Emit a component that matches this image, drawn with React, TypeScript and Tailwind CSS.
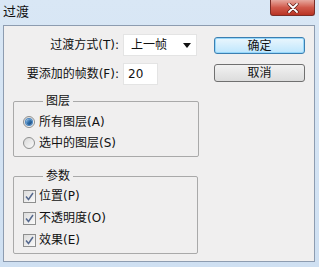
import React from "react";

const font = { fontFamily: '"DejaVu Sans", "Noto Sans CJK SC", sans-serif' };

function Radio({ checked }: { checked: boolean }) {
  return (
    <span className="w-[12px] h-[12px] rounded-full border border-[#8e8f8f] bg-gradient-to-br from-[#d8d8d8] to-[#fbfbfb] flex items-center justify-center shrink-0">
      {checked && (
        <span className="w-[6px] h-[6px] rounded-full bg-gradient-to-br from-[#9cc8ee] via-[#2f6fab] to-[#123f75] ring-1 ring-[#4b87c2]" />
      )}
    </span>
  );
}

function Check() {
  return (
    <span className="w-[13px] h-[13px] border border-[#8e8f8f] bg-gradient-to-br from-[#dcdcdc] to-[#fafafa] flex items-center justify-center shrink-0">
      <svg width="9" height="9" viewBox="0 0 9 9">
        <path d="M1 4.5 L3.5 7.5 L8 1" fill="none" stroke="#56698e" strokeWidth="1.5" />
      </svg>
    </span>
  );
}

export default function App() {
  return (
    <div
      className="w-[319px] h-[267px] bg-gradient-to-b from-[#d9e7f5] to-[#cfe0f2] flex flex-col overflow-hidden text-[12px] leading-[16px] text-[#111]"
      style={font}
    >
      <div className="h-[25px] flex justify-between shrink-0">
        <span className="pl-[3px] pt-[3px] text-[13px] leading-[17px]">过渡</span>
        <div className="mr-[4px] w-[45px] h-[16px] rounded-b-[3px] border border-t-0 border-[#7b2d27] bg-gradient-to-b from-[#e6a89f] via-[#d0594b] to-[#b93323] flex items-center justify-center">
          <svg width="12" height="10" viewBox="0 0 12 10">
            <path d="M2 1 L10 9 M10 1 L2 9" stroke="#5a1a14" strokeWidth="3.2" strokeLinecap="round" />
            <path d="M2 1 L10 9 M10 1 L2 9" stroke="#ffffff" strokeWidth="1.8" strokeLinecap="round" />
          </svg>
        </div>
      </div>
      <div className="ml-[3px] mr-[4px] mb-[5px] flex-1 border border-[#8d9cb0] bg-[#f0efef] flex">
        <div className="w-[194px] pt-[8px] flex flex-col">
          <div className="flex items-center h-[22px]">
            <span className="w-[115px] text-right">过渡方式(T):</span>
            <div className="ml-[4px] w-[74px] h-[22px] bg-white border border-[#e4e4e4] flex items-center justify-between pl-[7px] pr-[5px]">
              <span>上一帧</span>
              <svg width="8" height="5" viewBox="0 0 8 5">
                <path d="M0 0 L8 0 L4 5 Z" fill="#111" />
              </svg>
            </div>
          </div>
          <div className="flex items-center h-[22px] mt-[7px]">
            <span className="w-[115px] text-right">要添加的帧数(F):</span>
            <div className="ml-[4px] w-[35px] h-[22px] bg-white border border-[#e4e4e4] flex items-center pl-[4px]">
              20
            </div>
          </div>
          <fieldset className="ml-[9px] w-[186px] mt-[8px] border border-[#a9a9a9] rounded-[2px] pl-[9px] pb-[3px]">
            <legend className="ml-[20px] px-[3px]">图层</legend>
            <div className="pt-[3px] flex flex-col gap-[1px]">
              <label className="flex items-center gap-[4px] h-[20px]">
                <Radio checked />
                <span>所有图层(A)</span>
              </label>
              <label className="flex items-center gap-[4px] h-[20px]">
                <Radio checked={false} />
                <span>选中的图层(S)</span>
              </label>
            </div>
          </fieldset>
          <fieldset className="ml-[9px] w-[185px] mt-[11px] border border-[#a9a9a9] rounded-[2px] pl-[9px] pb-[3px]">
            <legend className="ml-[20px] px-[3px]">参数</legend>
            <div className="pt-[2px] flex flex-col gap-[2px]">
              <label className="flex items-center gap-[3px] h-[20px]">
                <Check />
                <span>位置(P)</span>
              </label>
              <label className="flex items-center gap-[3px] h-[20px]">
                <Check />
                <span>不透明度(O)</span>
              </label>
              <label className="flex items-center gap-[3px] h-[20px]">
                <Check />
                <span>效果(E)</span>
              </label>
            </div>
          </fieldset>
        </div>
        <div className="ml-[16px] pt-[11px] flex flex-col gap-[10px]">
          <button className="w-[91px] h-[17px] rounded-[3px] border border-[#3c7fb1] bg-gradient-to-b from-[#eaf6fd] to-[#bee6fd] ring-1 ring-inset ring-[#97d8fb] flex items-center justify-center text-[12px] leading-[16px]">
            确定
          </button>
          <button className="w-[91px] h-[18px] rounded-[3px] border border-[#707070] bg-gradient-to-b from-[#f2f2f2] to-[#dcdcdc] flex items-center justify-center text-[12px] leading-[16px]">
            取消
          </button>
        </div>
      </div>
    </div>
  );
}
